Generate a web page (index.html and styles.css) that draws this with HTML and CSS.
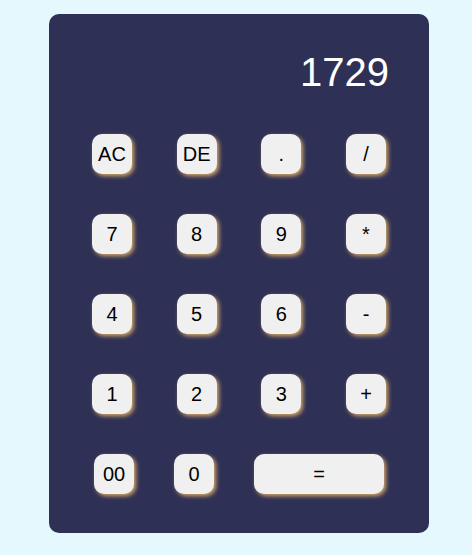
FILE: index.html
```html
<!DOCTYPE html>
<html>
<head>
<meta charset="utf-8">
<link rel="stylesheet" href="styles.css">
</head>
<body>
<div class="calc">
  <div class="display">1729</div>
  <div class="keys">
    <div class="row">
      <button class="key">AC</button>
      <button class="key">DE</button>
      <button class="key">.</button>
      <button class="key">/</button>
    </div>
    <div class="row">
      <button class="key">7</button>
      <button class="key">8</button>
      <button class="key">9</button>
      <button class="key">*</button>
    </div>
    <div class="row">
      <button class="key">4</button>
      <button class="key">5</button>
      <button class="key">6</button>
      <button class="key">-</button>
    </div>
    <div class="row">
      <button class="key">1</button>
      <button class="key">2</button>
      <button class="key">3</button>
      <button class="key">+</button>
    </div>
    <div class="row last">
      <button class="key">00</button>
      <button class="key">0</button>
      <button class="key wide">=</button>
    </div>
  </div>
</div>
</body>
</html>
```
FILE: styles.css
```css
html, body {
  margin: 0;
  padding: 0;
}
body {
  background: #e5f8fe;
  font-family: "Liberation Sans", Arial, sans-serif;
  padding-top: 14px;
  height: 555px;
  box-sizing: border-box;
}
.calc {
  width: 380px;
  height: 519px;
  margin-left: 49px;
  background: #2e3055;
  border-radius: 10px;
  box-sizing: border-box;
  padding-top: 35px;
  display: flex;
  flex-direction: column;
}
.display {
  color: #ffffff;
  font-size: 40px;
  line-height: 46px;
  text-align: right;
  padding-right: 40px;
}
.keys {
  margin-top: 39px;
  display: flex;
  flex-direction: column;
  gap: 40px;
}
.row {
  width: 294px;
  margin: 0 auto;
  display: flex;
  justify-content: space-between;
}
.row.last {
  width: auto;
  justify-content: center;
  gap: 40px;
}
.key {
  width: 40px;
  height: 40px;
  border: none;
  border-radius: 10px;
  background: #f0f0f0;
  color: #000;
  font-family: "Liberation Sans", Arial, sans-serif;
  font-size: 20px;
  padding: 0;
  box-shadow: 2px 2px 4px #d6a86a;
}
.key.wide {
  width: 130px;
}
```
